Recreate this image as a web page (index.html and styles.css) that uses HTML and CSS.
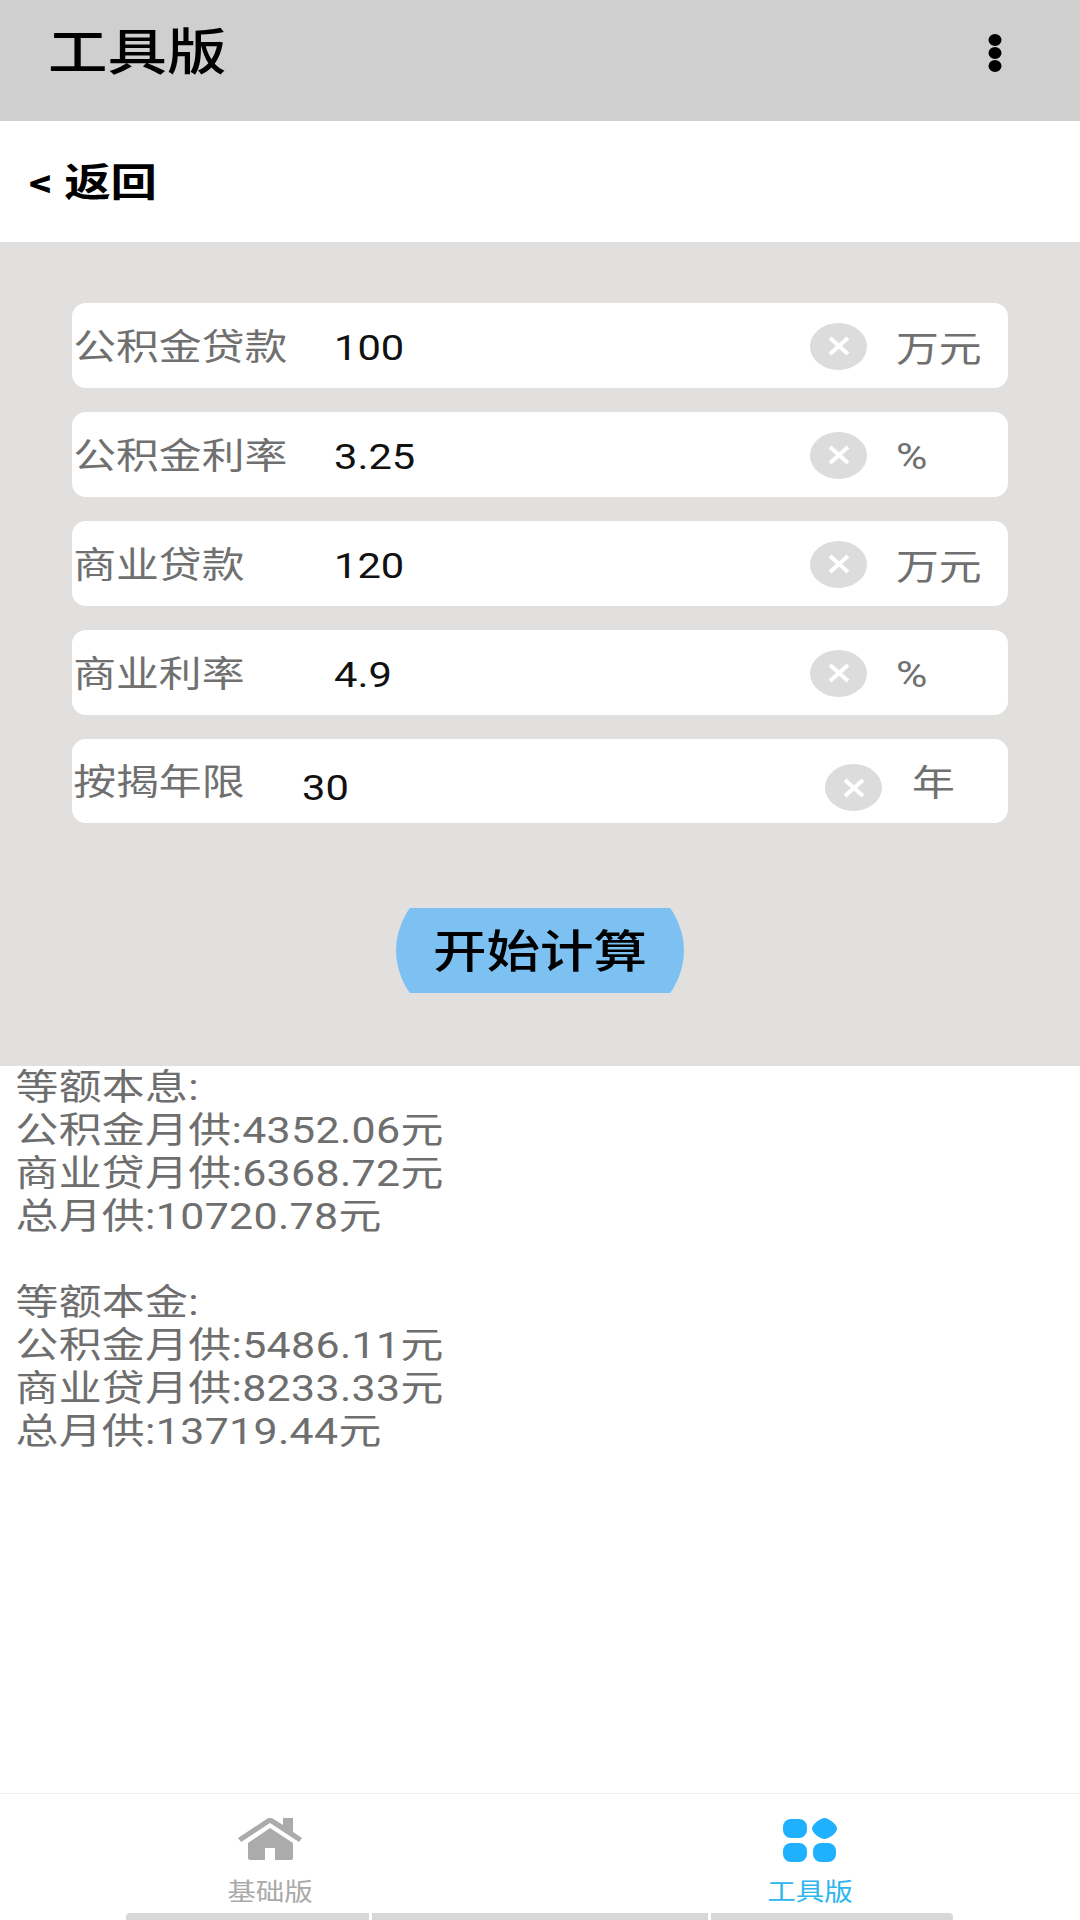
FILE: index.html
```html
<!DOCTYPE html>
<html>
<head>
  <meta charset="UTF-8">
  <title>工具版</title>
  <link rel="stylesheet" href="styles.css">
</head>
<body>
  <div class="app">
    <div class="title-bar">
      <span class="title wide">工具版</span>
      <svg class="more" width="14" height="38" viewBox="0 0 14 38">
        <ellipse cx="7" cy="6" rx="6.5" ry="6"/>
        <ellipse cx="7" cy="19" rx="6.5" ry="6"/>
        <ellipse cx="7" cy="32" rx="6.5" ry="6"/>
      </svg>
    </div>

    <div class="back-bar"><span class="wide">&lt; 返回</span></div>

    <div class="form-panel">
      <div class="row">
        <span class="label wide">公积金贷款</span>
        <span class="value wide">100</span>
        <span class="clear"><svg width="24" height="24" viewBox="0 0 24 24"><path d="M3 4 21 20M21 4 3 20"/></svg></span>
        <span class="unit wide">万元</span>
      </div>
      <div class="row">
        <span class="label wide">公积金利率</span>
        <span class="value wide">3.25</span>
        <span class="clear"><svg width="24" height="24" viewBox="0 0 24 24"><path d="M3 4 21 20M21 4 3 20"/></svg></span>
        <span class="unit unit-pct wide">%</span>
      </div>
      <div class="row">
        <span class="label wide">商业贷款</span>
        <span class="value wide">120</span>
        <span class="clear"><svg width="24" height="24" viewBox="0 0 24 24"><path d="M3 4 21 20M21 4 3 20"/></svg></span>
        <span class="unit wide">万元</span>
      </div>
      <div class="row">
        <span class="label wide">商业利率</span>
        <span class="value wide">4.9</span>
        <span class="clear"><svg width="24" height="24" viewBox="0 0 24 24"><path d="M3 4 21 20M21 4 3 20"/></svg></span>
        <span class="unit unit-pct wide">%</span>
      </div>
      <div class="row row-years">
        <span class="label wide">按揭年限</span>
        <span class="value wide">30</span>
        <span class="clear"><svg width="24" height="24" viewBox="0 0 24 24"><path d="M3 4 21 20M21 4 3 20"/></svg></span>
        <span class="unit wide">年</span>
      </div>
      <div class="calc-btn"><span class="calc-text">开始计算</span></div>
    </div>

    <div class="results wide">
      <div>等额本息:</div>
      <div>公积金月供:4352.06元</div>
      <div>商业贷月供:6368.72元</div>
      <div>总月供:10720.78元</div>
      <div class="blank"></div>
      <div>等额本金:</div>
      <div>公积金月供:5486.11元</div>
      <div>商业贷月供:8233.33元</div>
      <div>总月供:13719.44元</div>
    </div>

    <div class="tabs">
      <div class="tab">
        <svg class="tab-icon" width="64" height="44" viewBox="0 0 64 44">
          <path class="home" d="M0 20 29 .8Q32-1 35 .8L45 7V0H55V14L64 20 61 24 32 5 3 24Z"/>
          <path class="home" d="M32 10 55 25V40Q55 42 53 42H37V30H27V42H12Q10 42 10 40V25Z"/>
        </svg>
        <span class="tab-label">基础版</span>
      </div>
      <div class="tab tab-active">
        <svg class="tab-icon" width="54" height="44" viewBox="0 0 54 44">
          <rect class="tool" x="0" y="1" width="24" height="19" rx="8"/>
          <path class="tool" d="M41.5 0C45 0 54 6 54 10.5 54 15 46 21 41.5 21 37 21 29 15 29 10.5 29 6 38 0 41.5 0Z"/>
          <rect class="tool" x="0" y="25" width="24" height="19" rx="8"/>
          <rect class="tool" x="30" y="25" width="23" height="19" rx="8"/>
        </svg>
        <span class="tab-label">工具版</span>
      </div>
    </div>

    <div class="nav-strip">
      <span class="strip strip-left"></span>
      <span class="strip strip-mid"></span>
      <span class="strip strip-right"></span>
    </div>
  </div>
</body>
</html>
```

FILE: styles.css
```css
* {
  box-sizing: border-box;
}
body {
  margin: 0;
  background-color: #fff;
  font-family: Roboto, "Noto Sans CJK SC", sans-serif;
}
.app {
  width: 1080px;
  height: 1920px;
  display: flex;
  flex-direction: column;
  overflow: hidden;
}
/* the whole shot is stretched sideways, text needs the same */
.wide {
  transform: scaleX(1.19);
  transform-origin: left center;
}
.title-bar {
  height: 121px;
  flex: none;
  padding: 0 78px 0 48px;
  background-color: #cfcfcf;
  display: flex;
  justify-content: space-between;
  align-items: center;
}
.title {
  font-size: 50px;
  font-weight: 500;
  line-height: 106px;
  color: #000;
  margin-bottom: 16px;
}
.more {
  margin-bottom: 16px;
  fill: #000;
}
.back-bar {
  height: 121px;
  flex: none;
  padding: 3px 0 0 29px;
  background-color: #fff;
  font-size: 39px;
  font-weight: 700;
  line-height: 118px;
  color: #000;
}
.back-bar span {
  display: inline-block;
}
.form-panel {
  height: 824px;
  flex: none;
  padding: 61px 72px 0;
  background-color: #e1e0de;
  display: flex;
  flex-direction: column;
  gap: 24px;
}
.row {
  height: 85px;
  flex: none;
  background-color: #fff;
  border-radius: 14px;
  display: flex;
  align-items: center;
  font-size: 36px;
}
.label {
  width: 262px;
  flex: none;
  margin-top: -4px;
  padding-left: 1px;
  color: #707070;
}
.value {
  flex: 1;
  margin-top: 6px;
  color: #111;
  font-size: 35px;
}
.clear {
  width: 57px;
  height: 47px;
  flex: none;
  margin-top: 1px;
  margin-right: 29px;
  background-color: #dcdcdc;
  border-radius: 50%;
  display: flex;
  align-items: center;
  justify-content: center;
}
.clear svg {
  fill: none;
  stroke: #fff;
  stroke-width: 4;
}
.unit {
  width: 112px;
  flex: none;
  color: #707070;
}
.unit-pct {
  margin-top: 4px;
}
.row-years {
  height: 84px;
}
.row-years .label {
  width: 230px;
  margin-top: -4px;
}
.row-years .value {
  margin-top: 14px;
}
.row-years .clear {
  margin-top: 13px;
  margin-right: 30px;
}
.row-years .unit {
  width: 96px;
  margin-top: -3px;
}
.calc-btn {
  width: 288px;
  height: 85px;
  flex: none;
  margin: 61px auto 0;
  background-color: #7dc1f2;
  clip-path: ellipse(144px 100px at 50% 50%);
  font-size: 45px;
  font-weight: 500;
  line-height: 89px;
  text-align: center;
  color: #000;
}
.calc-text {
  display: inline-block;
  transform: scaleX(1.19);
}
.results {
  flex: 1;
  padding: 1px 0 0 13px;
  font-size: 36px;
  letter-spacing: 0.3px;
  line-height: 43px;
  color: #6e6e6e;
}
.blank {
  height: 43px;
}
.tabs {
  height: 120px;
  flex: none;
  border-top: 1px solid #f0f0f0;
  display: flex;
}
.tab {
  flex: 1;
  padding-top: 24px;
  display: flex;
  flex-direction: column;
  align-items: center;
  gap: 14px;
}
.tab-icon {
  display: block;
}
.home {
  fill: #ababab;
}
.tool {
  fill: #1fb1fd;
}
.tab-label {
  font-size: 24px;
  line-height: 32px;
  color: #aaa;
  transform: scaleX(1.19);
}
.tab-active .tab-label {
  color: #2fb6ee;
}
.nav-strip {
  height: 7px;
  flex: none;
  padding-left: 126px;
  display: flex;
  gap: 3px;
}
.strip {
  height: 7px;
  background-color: #d8d8d8;
}
.strip-left {
  width: 243px;
  border-top-left-radius: 4px;
}
.strip-mid {
  width: 336px;
}
.strip-right {
  width: 242px;
  border-top-right-radius: 4px;
}
```
